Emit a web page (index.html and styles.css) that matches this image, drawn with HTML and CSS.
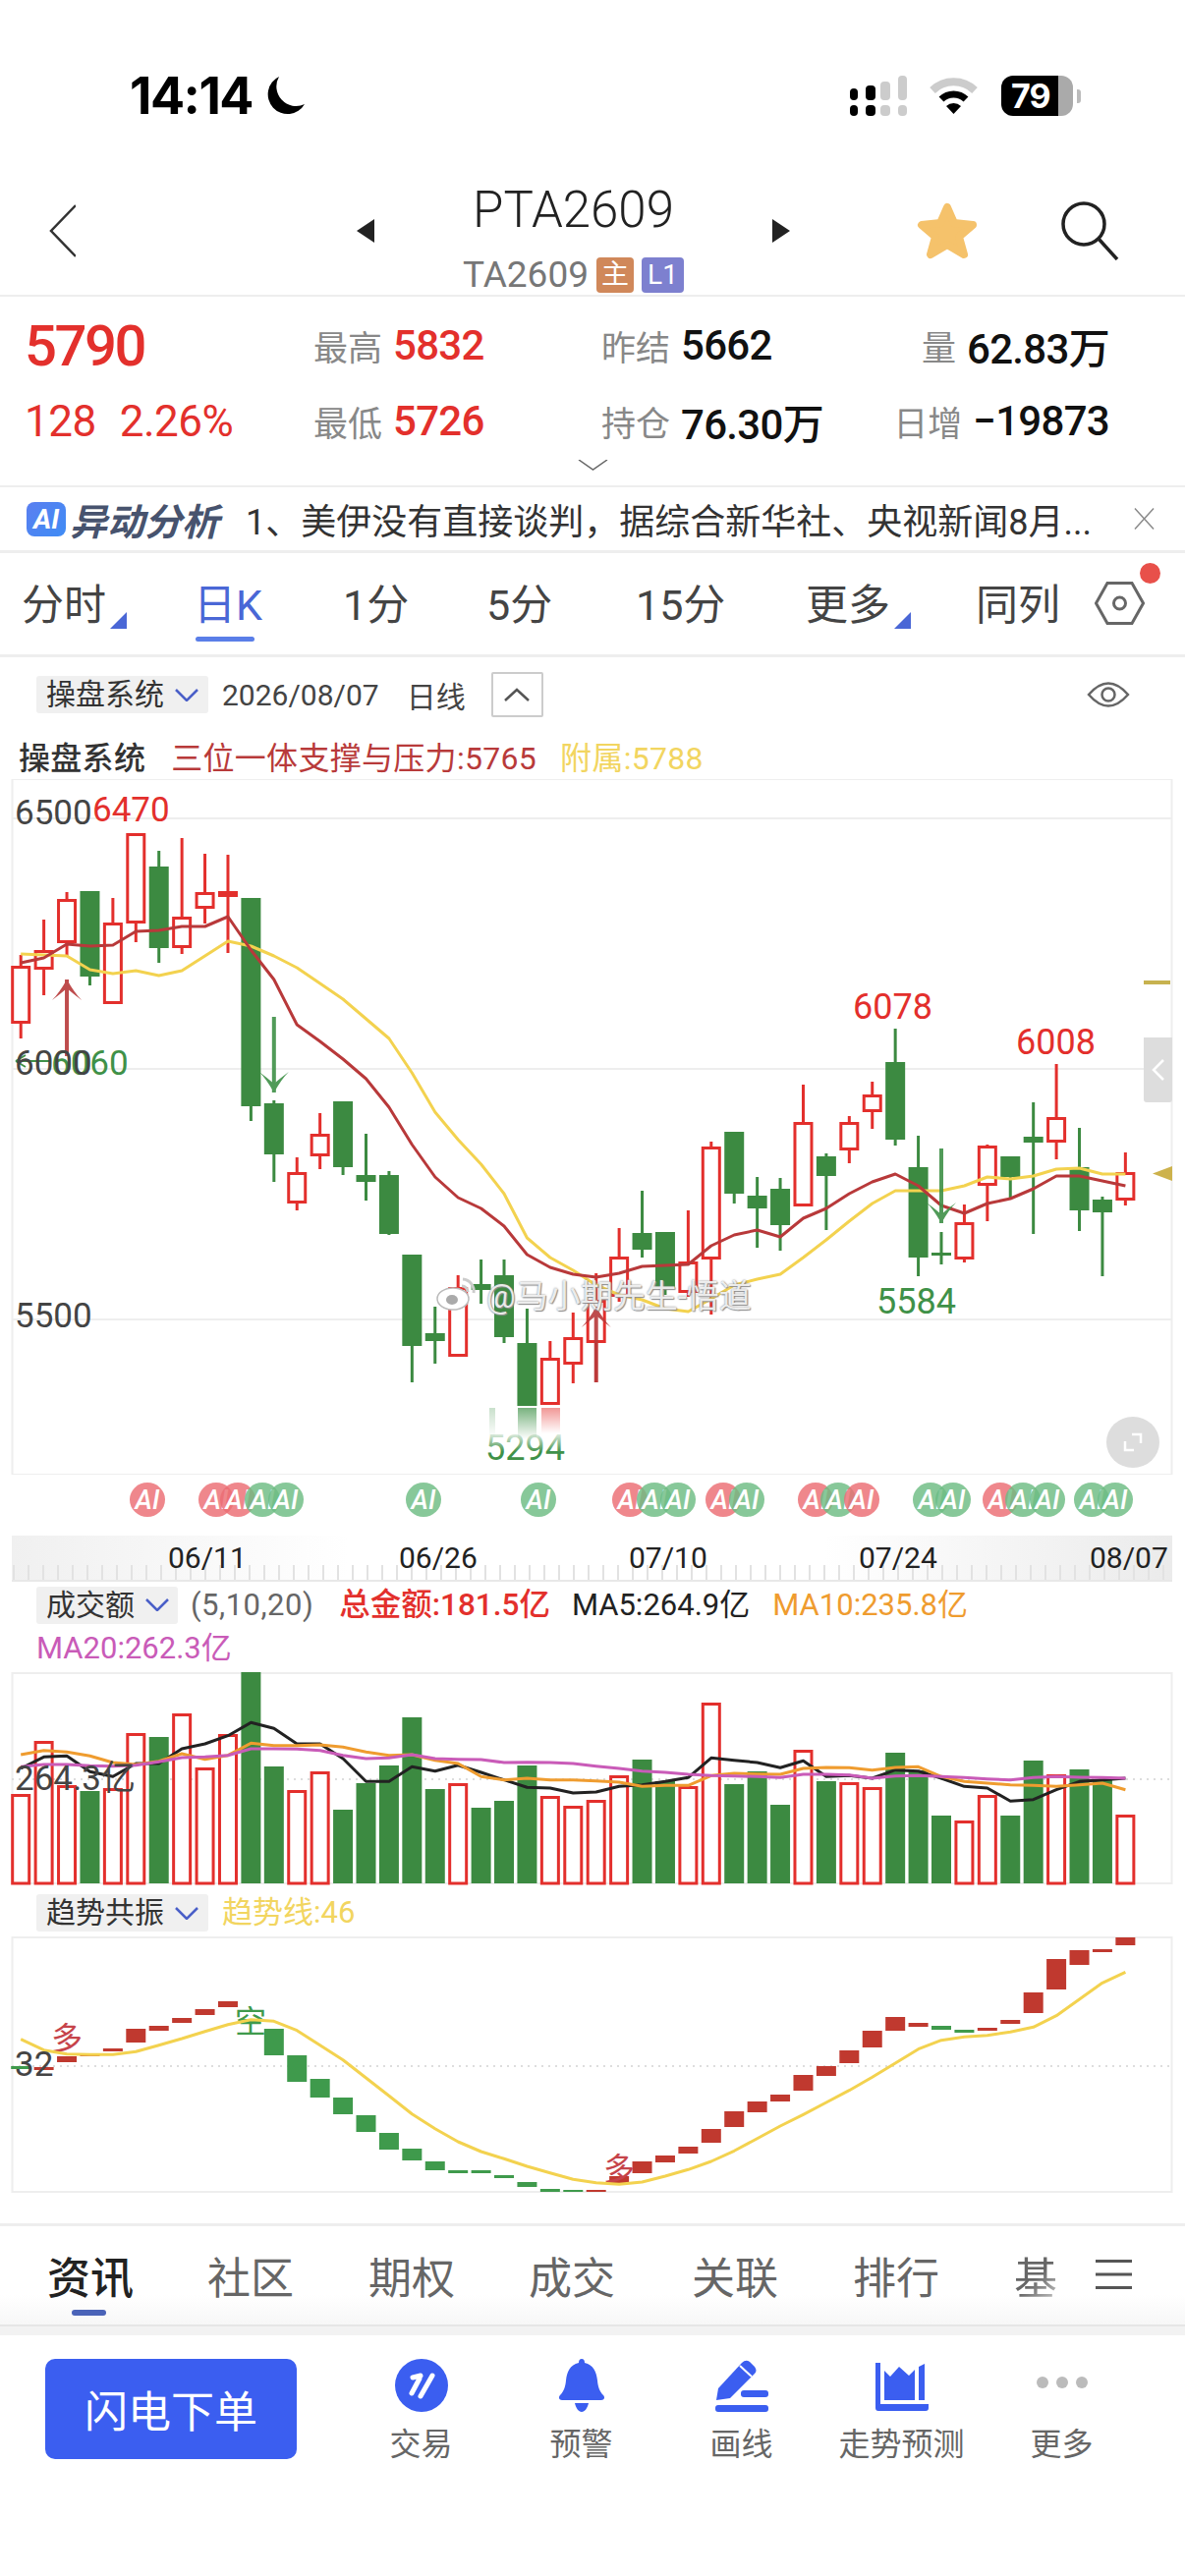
FILE: index.html
```html
<!DOCTYPE html>
<html lang="zh-CN">
<head>
  <meta charset="UTF-8" />
  <meta name="viewport" content="width=device-width, initial-scale=1.0" />
  <title>PTA2609</title>
  <link rel="stylesheet" href="styles.css">
</head>
<body>
  <!-- status bar -->
  <div class="status">
    <div class="status-left">
      <span class="time">14:14</span>
      <svg class="moon" viewBox="0 0 41 40"><path d="M15 0 A20 20 0 1 0 41 28 A20 20 0 0 1 15 0Z" fill="#000"/></svg>
    </div>
    <div class="status-right">
      <svg class="signal" viewBox="0 0 58 41">
        <rect x="0" y="13" width="8" height="12" rx="4" fill="#000"/>
        <rect x="16" y="10" width="10" height="15" rx="4" fill="#000"/>
        <rect x="31" y="6" width="10" height="19" rx="4" fill="#ccc"/>
        <rect x="49" y="0" width="9" height="25" rx="4" fill="#ccc"/>
        <rect x="0" y="30" width="8" height="11" rx="4" fill="#000"/>
        <rect x="16" y="30" width="10" height="11" rx="4" fill="#000"/>
        <rect x="31" y="30" width="10" height="11" rx="4" fill="#ccc"/>
        <rect x="49" y="30" width="9" height="11" rx="4" fill="#ccc"/>
      </svg>
      <svg class="wifi" viewBox="0 0 51 37">
        <path d="M4 13 A31 31 0 0 1 47 13" fill="none" stroke="#ccc" stroke-width="8"/>
        <path d="M13 22 A18 18 0 0 1 38 22" fill="none" stroke="#000" stroke-width="7"/>
        <path d="M18 29 A11 11 0 0 1 33 29 L25.5 37Z" fill="#000"/>
      </svg>
      <div class="battery"><span class="battery-level">79</span></div>
      <span class="battery-cap"></span>
    </div>
  </div>

  <!-- symbol header -->
  <header class="nav">
    <svg class="back" viewBox="0 0 27 54"><path d="M27 1 L2 27 L27 53" fill="none" stroke="#333" stroke-width="2.5"/></svg>
    <div class="symbol">
      <span class="arrow-left"></span>
      <div class="symbol-name">
        <div class="symbol-title">PTA2609</div>
        <div class="symbol-sub">
          <span class="symbol-code">TA2609</span>
          <span class="badge badge-main">主</span>
          <span class="badge badge-level">L1</span>
        </div>
      </div>
      <span class="arrow-right"></span>
    </div>
    <svg class="star" viewBox="0 0 62 60"><path d="M31 6 L38 22 L57 24 L43 36 L48 54 L31 44 L14 54 L19 36 L5 24 L24 22Z" fill="#f5c26b" stroke="#f5c26b" stroke-width="8" stroke-linejoin="round"/></svg>
    <svg class="search" viewBox="0 0 60 60"><circle cx="24" cy="23" r="21" fill="none" stroke="#222" stroke-width="3.5"/><path d="M39 38 L58 59" stroke="#222" stroke-width="3.5"/></svg>
  </header>

  <!-- quote panel -->
  <section class="quote">
    <div class="quote-cell price">5790</div>
    <div class="quote-cell"><span class="q-label">最高</span><span class="q-value up">5832</span></div>
    <div class="quote-cell"><span class="q-label">昨结</span><span class="q-value">5662</span></div>
    <div class="quote-cell q-right"><span class="q-label">量</span><span class="q-value">62.83万</span></div>
    <div class="quote-cell change"><span>128</span><span>2.26%</span></div>
    <div class="quote-cell"><span class="q-label">最低</span><span class="q-value up">5726</span></div>
    <div class="quote-cell"><span class="q-label">持仓</span><span class="q-value">76.30万</span></div>
    <div class="quote-cell q-right"><span class="q-label">日增</span><span class="q-value">−19873</span></div>
    <svg class="quote-more" viewBox="0 0 31 11"><path d="M1 0 L15.5 10 L30 0" fill="none" stroke="#666" stroke-width="1.5"/></svg>
  </section>

  <!-- AI news strip -->
  <section class="news">
    <span class="ai-logo">AI</span>
    <span class="news-title">异动分析</span>
    <span class="news-text">1、美伊没有直接谈判，据综合新华社、央视新闻8月...</span>
    <svg class="news-close" viewBox="0 0 22 22"><path d="M1 0 L21 22 M21 0 L1 22" stroke="#888" stroke-width="1.5"/></svg>
  </section>

  <!-- period tabs -->
  <nav class="periods">
    <span class="period">分时<i class="corner"></i></span>
    <span class="period period-on">日K</span>
    <span class="period">1分</span>
    <span class="period">5分</span>
    <span class="period">15分</span>
    <span class="period">更多<i class="corner"></i></span>
    <span class="period">同列</span>
    <span class="hex-wrap">
      <svg class="hex" viewBox="0 0 51 44"><path d="M1.5 22 L13 1.5 H38 L49.5 22 L38 42.5 H13Z" fill="none" stroke="#666" stroke-width="3"/><circle cx="25.5" cy="22" r="6" fill="none" stroke="#666" stroke-width="3"/></svg>
      <span class="hex-dot"></span>
    </span>
  </nav>

  <!-- chart toolbar -->
  <div class="toolbar">
    <span class="picker">操盘系统<svg class="picker-caret" viewBox="0 0 24 13"><path d="M1 1 L12 12 L23 1" fill="none" stroke="#4a5fc8" stroke-width="2.5"/></svg></span>
    <span class="tool-text tool-date">2026/08/07</span>
    <span class="tool-text tool-kind">日线</span>
    <span class="collapse"><svg viewBox="0 0 26 14"><path d="M1 13 L13 2 L25 13" fill="none" stroke="#555" stroke-width="2.5"/></svg></span>
    <svg class="eye" viewBox="0 0 44 30"><path d="M2 15 Q22 -8 42 15 Q22 38 2 15Z" fill="none" stroke="#666" stroke-width="2.5"/><circle cx="22" cy="15" r="6.5" fill="none" stroke="#666" stroke-width="2.5"/></svg>
  </div>
  <div class="legend">
    <span class="legend-name">操盘系统</span>
    <span class="legend-red">三位一体支撑与压力:5765</span>
    <span class="legend-yellow">附属:5788</span>
  </div>

  <!-- candlestick pane -->
  <div class="pane-main">
    <svg id="mainChart" class="chart chart-main" viewBox="0 793 1206 708"></svg>
    <div class="watermark">
      <svg class="wb-logo" viewBox="0 0 41 34">
        <ellipse cx="17" cy="22" rx="16" ry="11" fill="#fff" stroke="#bbb" stroke-width="1.5"/>
        <ellipse cx="16" cy="23" rx="6" ry="5" fill="#aaa"/>
        <path d="M27 2 A12 12 0 0 1 38 16 M26 9 A6 6 0 0 1 32 15" fill="none" stroke="#ccc" stroke-width="3"/>
      </svg>
      <span>@马小期先生-悟道</span>
    </div>
    <div class="side-handle"><svg viewBox="0 0 14 24"><path d="M12 2 L2 12 L12 22" fill="none" stroke="#fff" stroke-width="2.5"/></svg></div>
    <span class="last-mark"></span>
    <div class="fullscreen"><svg viewBox="0 0 22 22"><path d="M10 3 H19 V12 M3 10 V19 H12" fill="none" stroke="#fff" stroke-width="2.5"/></svg></div>
  </div>
  <svg id="markerRow" class="chart chart-markers" viewBox="0 1501 1206 62"></svg>
  <svg id="timeAxis" class="chart chart-axis" viewBox="0 1563 1206 47"></svg>

  <!-- turnover pane -->
  <div class="vol-head">
    <span class="picker picker-small">成交额<svg class="picker-caret" viewBox="0 0 24 13"><path d="M1 1 L12 12 L23 1" fill="none" stroke="#4a5fc8" stroke-width="2.5"/></svg></span>
    <span class="vol-args">(5,10,20)</span>
    <span class="vol-total">总金额:181.5亿</span>
    <span class="vol-ma5">MA5:264.9亿</span>
    <span class="vol-ma10">MA10:235.8亿</span>
    <span class="vol-ma20">MA20:262.3亿</span>
  </div>
  <svg id="volChart" class="chart chart-vol" viewBox="0 1702 1206 217"></svg>

  <!-- trend pane -->
  <div class="trend-head">
    <span class="picker">趋势共振<svg class="picker-caret" viewBox="0 0 24 13"><path d="M1 1 L12 12 L23 1" fill="none" stroke="#4a5fc8" stroke-width="2.5"/></svg></span>
    <span class="trend-value">趋势线:46</span>
  </div>
  <svg id="trendChart" class="chart chart-trend" viewBox="0 1971 1206 262"></svg>

  <!-- info tabs -->
  <nav class="info-tabs">
    <span class="info-tab info-on">资讯</span>
    <span class="info-tab">社区</span>
    <span class="info-tab">期权</span>
    <span class="info-tab">成交</span>
    <span class="info-tab">关联</span>
    <span class="info-tab">排行</span>
    <span class="info-tab info-fade">基</span>
    <svg class="info-menu" viewBox="0 0 37 30"><path d="M0 1.5 H37 M0 15 H37 M0 28.5 H37" stroke="#555" stroke-width="3"/></svg>
  </nav>

  <!-- bottom actions -->
  <footer class="actions">
    <button class="order">闪电下单</button>
    <div class="action">
      <svg class="action-icon" viewBox="0 0 54 54"><circle cx="27" cy="27" r="27" fill="#3b5ef0"/><path d="M17 35 L25 20 M26 38 L38 17 M18 19 L26 17" stroke="#fff" stroke-width="5" stroke-linecap="round"/></svg>
      <span>交易</span>
    </div>
    <div class="action">
      <svg class="action-icon" viewBox="0 0 48 54"><path d="M24 0 C26 0 27 1.5 27 4 C36 6 39 13 40 22 C40.500 28 42 33 46 37 C48 39 47 42 44 42 H4 C1 42 0 39 2 37 C6 33 7.500 28 8 22 C9 13 12 6 21 4 C21 1.500 22 0 24 0Z M17 45 H31 C30 50 27 54 24 54 S18 50 17 45Z" fill="#3b5ef0"/></svg>
      <span>预警</span>
    </div>
    <div class="action">
      <svg class="action-icon" viewBox="0 0 54 54"><path d="M1 42 L3 30 L27 4 Q31 0 35 3 L40 8 Q43 12 40 15 L15 40 Z" fill="#3b5ef0"/><path d="M25 7 L37 18" stroke="#fff" stroke-width="2"/><rect x="26" y="32" width="28" height="7" rx="3" fill="#3b5ef0"/><rect x="0" y="47" width="54" height="7" rx="3" fill="#3b5ef0"/></svg>
      <span>画线</span>
    </div>
    <div class="action">
      <svg class="action-icon" viewBox="0 0 54 54"><path d="M0 4 H5 V46 H54 V50 Q54 53 51 53 H3 Q0 53 0 50Z" fill="#3b5ef0"/><path d="M9 12 L15 18 L24 8 L34 17 L40 11 V42 H9Z M44 8 L50 5 V42 H44Z" fill="#3b5ef0"/></svg>
      <span>走势预测</span>
    </div>
    <div class="action">
      <svg class="action-icon" viewBox="0 0 54 54"><circle cx="7" cy="24" r="6" fill="#bbb"/><circle cx="27" cy="24" r="6" fill="#bbb"/><circle cx="47" cy="24" r="6" fill="#bbb"/></svg>
      <span>更多</span>
    </div>
  </footer>

  <script src="chart.js"></script>
</body>
</html>
```

FILE: styles.css
```css
* {
  box-sizing: border-box;
}

body {
  margin: 0;
  width: 1206px;
  height: 2622px;
  overflow: hidden;
  background: #fff;
  color: #222;
  font-family: Roboto, "Noto Sans CJK SC", sans-serif;
}

/* status bar */
.status {
  height: 170px;
  padding: 77px 106px 0 132px;
  display: flex;
  justify-content: space-between;
}

.status-left {
  display: flex;
  gap: 12px;
  height: 41px;
  align-items: center;
}

.time {
  font-family: Inter, sans-serif;
  font-weight: 700;
  font-size: 52px;
  letter-spacing: -1.5px;
  color: #000;
}

.moon {
  width: 41px;
  height: 40px;
}

.status-right {
  display: flex;
  align-items: center;
  height: 41px;
}

.signal {
  width: 58px;
  height: 41px;
  margin-right: 22px;
}

.wifi {
  width: 51px;
  height: 37px;
  margin-right: 23px;
}

.battery {
  width: 73px;
  height: 41px;
  border-radius: 12px;
  background: linear-gradient(90deg, #000 80%, #aaa 80%);
  display: flex;
  align-items: center;
  padding-left: 10px;
}

.battery-level {
  color: #fff;
  font-family: Inter, sans-serif;
  font-weight: 700;
  font-size: 34px;
  letter-spacing: -1px;
}

.battery-cap {
  width: 4px;
  height: 14px;
  margin-left: 4px;
  background: #bbb;
  border-radius: 0 3px 3px 0;
}

/* symbol header */
.nav {
  height: 132px;
  padding-left: 50px;
  border-bottom: 2px solid #eee;
  display: flex;
  align-items: flex-start;
}

.back {
  width: 27px;
  height: 54px;
  margin-top: 38px;
}

.symbol {
  width: 441px;
  margin-left: 286px;
  display: flex;
  justify-content: space-between;
}

.arrow-left,
.arrow-right {
  width: 18px;
  height: 24px;
  margin-top: 53px;
  background: #222;
}

.arrow-left {
  clip-path: polygon(100% 0, 100% 100%, 0 50%);
}

.arrow-right {
  clip-path: polygon(0 0, 100% 50%, 0 100%);
}

.symbol-name {
  display: flex;
  flex-direction: column;
  align-items: center;
}

.symbol-title {
  font-size: 51px;
  line-height: 56px;
  margin-top: 16px;
  font-weight: 300;
  color: #222;
}

.symbol-sub {
  display: flex;
  align-items: center;
  margin-top: 16px;
}

.symbol-code {
  font-size: 37px;
  color: #777;
  margin-right: 8px;
}

.badge {
  height: 36px;
  border-radius: 4px;
  color: #fff;
  font-size: 28px;
  line-height: 36px;
  text-align: center;
}

.badge-main {
  width: 38px;
  background: #d0885a;
  margin-right: 8px;
}

.badge-level {
  width: 43px;
  background: #7d80cf;
}

.star {
  width: 62px;
  height: 60px;
  margin: 35px 0 0 129px;
}

.search {
  width: 60px;
  height: 60px;
  margin: 35px 0 0 84px;
}

/* quote panel */
.quote {
  position: relative;
  height: 194px;
  padding: 11px 77px 0 25px;
  border-bottom: 2px solid #eee;
  display: grid;
  grid-template-columns: 294px 293px 1fr 260px;
  grid-auto-rows: 77px;
  align-items: center;
}

.quote-cell {
  display: flex;
  align-items: center;
  gap: 11px;
}

.q-label {
  font-size: 35px;
  color: #888;
}

.q-value {
  font-size: 42px;
  font-weight: 500;
  letter-spacing: -.7px;
  color: #111;
}

.q-value.up,
.price,
.change {
  color: #e3302c;
}

.q-right {
  justify-content: flex-end;
}

.price {
  font-size: 58px;
  font-weight: 500;
  letter-spacing: -2.500px;
}

.change {
  font-size: 44px;
  gap: 24px;
  letter-spacing: -.5px;
}

.quote-more {
  position: absolute;
  left: 588px;
  top: 166px;
  width: 31px;
  height: 11px;
}

/* AI news strip */
.news {
  height: 67px;
  padding: 0 31px 0 27px;
  border-bottom: 3px solid #eee;
  display: flex;
  align-items: center;
}

.ai-logo {
  width: 40px;
  height: 35px;
  border-radius: 8px;
  background: linear-gradient(135deg, #5b7ff0, #3f8cf5);
  color: #fff;
  font-weight: 700;
  font-style: italic;
  font-size: 28px;
  line-height: 35px;
  text-align: center;
}

.news-title {
  margin-left: 4px;
  font-size: 38px;
  font-style: italic;
  font-weight: 700;
  color: #47536e;
}

.news-text {
  margin-left: 27px;
  font-size: 36px;
  color: #333;
  white-space: nowrap;
}

.news-close {
  width: 21px;
  height: 22px;
  margin-left: auto;
}

/* period tabs */
.periods {
  height: 106px;
  padding: 27px 0 0 22px;
  border-bottom: 3px solid #eee;
  display: grid;
  grid-template-columns: 175px 152px 146px 152px 173px 173px 121px 1fr;
}

.period {
  font-size: 43px;
  line-height: 52px;
  height: 52px;
  color: #444;
  display: flex;
}

.period-on {
  position: relative;
  color: #4a67d6;
}

.period-on::after {
  content: "";
  position: absolute;
  left: 2px;
  top: 58px;
  width: 60px;
  height: 5px;
  border-radius: 3px;
  background: #5a7ee8;
}

.corner {
  width: 17px;
  height: 17px;
  margin: 33px 0 0 4px;
  background: #4a67d6;
  clip-path: polygon(100% 0, 100% 100%, 0 100%);
}

.hex-wrap {
  position: relative;
}

.hex {
  width: 51px;
  height: 44px;
  margin-top: 2px;
}

.hex-dot {
  position: absolute;
  left: 46px;
  top: -17px;
  width: 21px;
  height: 21px;
  border-radius: 50%;
  background: #e8504a;
}

/* chart toolbar */
.toolbar {
  height: 76px;
  padding: 0 56px 0 37px;
  display: flex;
  align-items: center;
}

.picker {
  width: 175px;
  height: 38px;
  padding-left: 10px;
  background: #f0f0f0;
  border-radius: 3px;
  font-size: 30px;
  line-height: 38px;
  color: #333;
  display: flex;
  align-items: center;
  gap: 11px;
}

.picker-small {
  width: 144px;
}

.picker-caret {
  width: 24px;
  height: 13px;
}

.tool-text {
  font-size: 30px;
  color: #444;
}

.tool-date {
  margin-left: 14px;
}

.tool-kind {
  margin-left: 28px;
}

.collapse {
  width: 53px;
  height: 46px;
  margin-left: 26px;
  border: 2px solid #ccc;
  border-radius: 2px;
  display: flex;
  align-items: center;
  justify-content: center;
}

.collapse svg {
  width: 26px;
  height: 14px;
}

.eye {
  width: 44px;
  height: 30px;
  margin-left: auto;
}

.legend {
  height: 48px;
  padding-left: 19px;
  display: flex;
  align-items: center;
  font-size: 32px;
  letter-spacing: .3px;
}

.legend-name {
  color: #333;
  font-weight: 500;
}

.legend-red {
  margin-left: 26px;
  color: #b83a3a;
}

.legend-yellow {
  margin-left: 24px;
  color: #f2d560;
}

/* chart panes */
.chart {
  display: block;
  width: 1206px;
}

.chart-main {
  height: 708px;
}

.chart-markers {
  height: 62px;
}

.chart-axis {
  height: 47px;
}

.chart-vol {
  height: 217px;
}

.chart-trend {
  height: 262px;
}

.pane-main {
  position: relative;
}

.watermark {
  position: absolute;
  left: 444px;
  top: 500px;
  display: flex;
  align-items: center;
  gap: 10px;
  font-size: 33px;
  color: rgba(255, 255, 255, .85);
  text-shadow: 0 0 2px #777, 1px 1px 1px #999;
  white-space: nowrap;
}

.wb-logo {
  width: 41px;
  height: 34px;
}

.side-handle {
  position: absolute;
  left: 1164px;
  top: 263px;
  width: 29px;
  height: 66px;
  background: #ddd;
  border-radius: 0 0 3px 3px;
  display: flex;
  align-items: center;
  justify-content: center;
}

.side-handle svg {
  width: 14px;
  height: 24px;
}

.last-mark {
  position: absolute;
  left: 1173px;
  top: 394px;
  width: 20px;
  height: 15px;
  background: #cdb24c;
  clip-path: polygon(0 50%, 100% 0, 100% 100%);
}

.fullscreen {
  position: absolute;
  left: 1126px;
  top: 649px;
  width: 54px;
  height: 52px;
  border-radius: 50%;
  background: #ddd;
  display: flex;
  align-items: center;
  justify-content: center;
}

.fullscreen svg {
  width: 22px;
  height: 22px;
}

/* turnover legend */
.vol-head {
  height: 92px;
  padding: 4px 0 0 37px;
  display: flex;
  flex-wrap: wrap;
  align-items: center;
  align-content: flex-start;
  font-size: 31px;
  line-height: 39px;
}

.vol-args {
  margin-left: 13px;
  color: #666;
  font-size: 31px;
  letter-spacing: .5px;
}

.vol-total {
  margin-left: 26px;
  color: #e3302c;
  font-weight: 500;
  font-size: 31.500px;
}

.vol-ma5 {
  margin-left: 22px;
  color: #222;
}

.vol-ma10 {
  margin-left: 23px;
  color: #ef9c2f;
}

.vol-ma20 {
  width: 100%;
  margin-top: 10px;
  line-height: 30px;
  color: #c95bb8;
}

/* trend legend */
.trend-head {
  height: 52px;
  padding: 9px 0 0 37px;
  display: flex;
  align-items: flex-start;
}

.trend-value {
  margin-left: 14px;
  font-size: 31px;
  line-height: 38px;
  color: #f2d560;
}

/* info tabs */
.info-tabs {
  position: relative;
  margin-top: 30px;
  height: 105px;
  padding: 26px 0 0 48px;
  border-top: 3px solid #eee;
  border-bottom: 2px solid #e6e6e6;
  background: linear-gradient(180deg, #fff 70%, #f7f7f7 100%);
  display: grid;
  grid-template-columns: 163px 164px 163px 166px 164px 164px 83px auto;
}

.info-tab {
  font-size: 44px;
  line-height: 56px;
  height: 56px;
  color: #666;
}

.info-on {
  position: relative;
  color: #222;
  font-weight: 500;
}

.info-on::after {
  content: "";
  position: absolute;
  left: 25px;
  top: 59px;
  width: 35px;
  height: 6px;
  border-radius: 3px;
  background: #4a63b8;
}

.info-fade {
  -webkit-mask-image: linear-gradient(135deg, #000 35%, transparent 85%);
  mask-image: linear-gradient(135deg, #000 35%, transparent 85%);
}

.info-menu {
  width: 37px;
  height: 30px;
  margin-top: 8px;
}

/* bottom actions */
.actions {
  padding: 24px 0 0 46px;
  border-top: 9px solid #f2f2f2;
  display: flex;
}

.order {
  width: 256px;
  height: 102px;
  margin-right: 45px;
  border: none;
  border-radius: 10px;
  background: #3b5ef0;
  color: #fff;
  font-family: inherit;
  font-size: 44px;
}

.action {
  width: 163px;
  display: flex;
  flex-direction: column;
  align-items: center;
  font-size: 32px;
  line-height: 40px;
  color: #666;
}

.action-icon {
  width: 54px;
  height: 54px;
  margin-bottom: 13px;
}
```

FILE: chart.js
```js
const RED = '#e32f2c';
const GREEN = '#3c8a41';
const LINE_RED = '#b8393a';
const LINE_YELLOW = '#f3d24f';

const cx = i => 21.2 + 23.42 * i;

// type, high, body top, body bottom, low
const candles = [
  ['r', 972, 983, 1042, 1057], ['r', 936, 967, 987, 1013], ['r', 908, 915, 960, 973],
  ['g', 907, 907, 994, 1003], ['r', 914, 939, 1022, 1022], ['r', 848, 848, 940, 959],
  ['g', 866, 882, 965, 980], ['r', 853, 933, 965, 971], ['r', 869, 908, 925, 940],
  ['r', 870, 907, 913, 970], ['g', 914, 914, 1126, 1141], ['g', 1120, 1123, 1175, 1203],
  ['r', 1178, 1193, 1225, 1232], ['r', 1133, 1154, 1177, 1190], ['g', 1121, 1121, 1188, 1196],
  ['g', 1154, 1196, 1203, 1222], ['g', 1192, 1196, 1256, 1257], ['g', 1277, 1277, 1370, 1407],
  ['g', 1330, 1357, 1365, 1388], ['r', 1298, 1310, 1381, 1381], ['g', 1282, 1307, 1313, 1327],
  ['g', 1282, 1298, 1361, 1367], ['g', 1332, 1367, 1431, 1431], ['r', 1365, 1382, 1430, 1430],
  ['r', 1336, 1361, 1389, 1408], ['r', 1296, 1323, 1367, 1407], ['r', 1250, 1279, 1320, 1325],
  ['g', 1212, 1255, 1272, 1280], ['g', 1254, 1254, 1312, 1318], ['r', 1232, 1284, 1316, 1320],
  ['r', 1162, 1167, 1282, 1338], ['g', 1152, 1152, 1215, 1225], ['g', 1198, 1217, 1230, 1270],
  ['g', 1199, 1210, 1247, 1273], ['r', 1104, 1142, 1228, 1228], ['g', 1174, 1177, 1197, 1252],
  ['r', 1136, 1142, 1171, 1184], ['r', 1101, 1114, 1132, 1149], ['g', 1047, 1081, 1160, 1166],
  ['g', 1156, 1188, 1280, 1299], ['g', 1254, 1275, 1278, 1287], ['r', 1226, 1244, 1282, 1285],
  ['r', 1165, 1166, 1207, 1243], ['g', 1177, 1177, 1198, 1220], ['g', 1122, 1157, 1163, 1256],
  ['r', 1083, 1137, 1163, 1180], ['g', 1148, 1188, 1232, 1253], ['g', 1218, 1221, 1234, 1299],
  ['r', 1173, 1193, 1222, 1227]
];

const maRed = [980, 975, 961, 963, 962, 948, 947, 943, 943, 933, 967, 997, 1043, 1060, 1078, 1098, 1127,
  1165, 1198, 1219, 1230, 1248, 1277, 1290, 1297, 1300, 1296, 1289, 1288, 1287, 1268, 1257, 1252, 1259,
  1240, 1230, 1215, 1203, 1195, 1207, 1227, 1235, 1225, 1220, 1210, 1197, 1197, 1202, 1207];

const maYellow = [971, 972, 973, 987, 991, 988, 993, 988, 973, 958, 963, 973, 985, 1001, 1017, 1037, 1057,
  1092, 1132, 1160, 1185, 1215, 1260, 1280, 1293, 1308, 1318, 1323, 1332, 1335, 1322, 1308, 1302, 1297,
  1280, 1262, 1243, 1225, 1212, 1212, 1212, 1207, 1198, 1200, 1197, 1190, 1189, 1195, 1195];

// turnover: top of each bar
const volumes = [
  ['r', 1826], ['r', 1772], ['r', 1817], ['g', 1823], ['r', 1820], ['r', 1764], ['g', 1768], ['r', 1744],
  ['r', 1799], ['r', 1765], ['g', 1702], ['g', 1798], ['r', 1822], ['r', 1803], ['g', 1842], ['g', 1815],
  ['g', 1797], ['g', 1748], ['g', 1821], ['r', 1815], ['g', 1840], ['g', 1833], ['g', 1797], ['r', 1828],
  ['r', 1838], ['r', 1832], ['r', 1807], ['g', 1791], ['g', 1813], ['r', 1818], ['r', 1733], ['g', 1816],
  ['g', 1803], ['g', 1837], ['r', 1781], ['g', 1813], ['r', 1814], ['r', 1819], ['g', 1784], ['g', 1802],
  ['g', 1848], ['r', 1853], ['r', 1827], ['g', 1848], ['g', 1792], ['r', 1806], ['g', 1801], ['g', 1812],
  ['r', 1847]
];

const volY = v => 1500 + v / 3;
const ma5 = [900, 865, 862, 910, 925, 885, 885, 840, 825, 800, 760, 778, 825, 825, 870, 940, 940, 895, 908, 890, 912,
  935, 958, 960, 975, 972, 955, 950, 940, 928, 868, 875, 882, 898, 877, 925, 922, 930, 905, 908, 930, 955, 960, 1000,
  995, 965, 940, 935, 930].map(volY);
const ma10 = [858, 845, 850, 862, 882, 888, 878, 855, 872, 860, 823, 830, 830, 828, 835, 850, 860, 858, 875, 885, 925,
  935, 930, 935, 935, 938, 942, 955, 952, 952, 922, 915, 917, 918, 900, 897, 898, 905, 897, 895, 925, 940, 945, 950,
  952, 955, 950, 945, 965].map(volY);
const ma20 = [895, 888, 888, 892, 893, 890, 880, 867, 865, 860, 840, 840, 841, 845, 860, 870, 868, 858, 870, 872, 873,
  882, 881, 882, 885, 893, 900, 908, 912, 918, 922, 923, 925, 928, 918, 918, 920, 930, 923, 922, 925, 928, 932, 935,
  928, 925, 927, 928, 930].map(volY);

// trend blocks: type, top, bottom
const trend = [
  ['g', 2103, 2106], ['r', 2104, 2107], ['r', 2093, 2099], ['r', 2092, 2093], ['r', 2085, 2088], ['r', 2065, 2079],
  ['r', 2062, 2067], ['r', 2054, 2059], ['r', 2045, 2051], ['r', 2037, 2043], ['g', 2055, 2060], ['g', 2065, 2092],
  ['g', 2092, 2119], ['g', 2116, 2135], ['g', 2135, 2152], ['g', 2153, 2170], ['g', 2171, 2188], ['g', 2187, 2199],
  ['g', 2200, 2209], ['g', 2209, 2212], ['g', 2209, 2212], ['g', 2214, 2217], ['g', 2221, 2226], ['g', 2228, 2231],
  ['g', 2229, 2231], ['r', 2229, 2231], ['r', 2215, 2222], ['r', 2200, 2212], ['r', 2194, 2201], ['r', 2185, 2192],
  ['r', 2167, 2181], ['r', 2149, 2165], ['r', 2139, 2150], ['r', 2132, 2139], ['r', 2112, 2128], ['r', 2103, 2113],
  ['r', 2087, 2100], ['r', 2067, 2084], ['r', 2053, 2067], ['r', 2059, 2063], ['g', 2062, 2066], ['g', 2066, 2069],
  ['r', 2064, 2067], ['r', 2056, 2060], ['r', 2028, 2049], ['r', 1994, 2025], ['r', 1985, 2000], ['r', 1984, 1987],
  ['r', 1972, 1980]
];

const trendLine = [407, 440, 452, 454, 454, 445, 425, 405, 383, 362, 347, 352, 380, 425, 470, 525, 580, 635, 680, 720, 750,
  772, 795, 815, 835, 845, 850, 843, 825, 805, 780, 748, 710, 672, 637, 600, 563, 523, 480, 437, 410, 400, 395, 385, 370,
  335, 285, 235, 202].map(v => 1940 + v / 3);

// AI markers along the bottom of the candles
const aiMarks = [['r', 150], ['r', 220], ['r', 242], ['g', 267], ['g', 291], ['g', 431], ['g', 548], ['r', 641], ['g', 666],
  ['g', 690], ['r', 736], ['g', 760], ['r', 830], ['g', 853], ['r', 877], ['g', 947], ['g', 970], ['r', 1018], ['g', 1041],
  ['g', 1066], ['g', 1111], ['g', 1135]];

function frame(top, bottom) {
  return `<rect x="12.500" y="${top}" width="1180" height="${bottom - top}" fill="none" stroke="#eee" stroke-width="2"/>`;
}

function gridline(y, dotted) {
  const dash = dotted ? ' stroke-dasharray="2 5"' : '';
  return `<line x1="12" x2="1193" y1="${y}" y2="${y}" stroke="${dotted ? '#ddd' : '#eee'}" stroke-width="2"${dash}/>`;
}

function label(x, y, text, color, size = 35) {
  return `<text x="${x}" y="${y}" fill="${color}" font-size="${size}">${text}</text>`;
}

function polyline(values, color, width = 3) {
  const pts = values.map((y, i) => `${cx(i).toFixed(1)},${y.toFixed(1)}`).join(' ');
  return `<polyline points="${pts}" fill="none" stroke="${color}" stroke-width="${width}" stroke-linejoin="round"/>`;
}

function drawCandle(c, i) {
  const [type, high, top, bottom, low] = c;
  const x = cx(i);
  if (type === 'g') {
    return `<rect x="${x - 1.5}" y="${high}" width="3" height="${low - high}" fill="${GREEN}"/>` +
      `<rect x="${x - 10}" y="${top}" width="20" height="${Math.max(bottom - top, 2)}" fill="${GREEN}"/>`;
  }
  return `<rect x="${x - 1.5}" y="${high}" width="3" height="${top - high}" fill="${RED}"/>` +
    `<rect x="${x - 1.5}" y="${bottom}" width="3" height="${low - bottom}" fill="${RED}"/>` +
    `<rect x="${x - 8.500}" y="${top + 1.500}" width="17" height="${bottom - top - 3}" fill="#fff" stroke="${RED}" stroke-width="3"/>`;
}

// tip is where the arrow points, tail is the far end of its shaft
function arrow(x, tip, tail, color) {
  const dir = tail > tip ? 1 : -1;
  const wing = tip + dir * 21;
  const notch = tip + dir * 9;
  const bend = tip + dir * 15;
  return `<g opacity=".9"><rect x="${x - 2}" y="${Math.min(tip, tail)}" width="4" height="${Math.abs(tail - tip)}" fill="${color}"/>` +
    `<path d="M${x} ${tip} Q${x - 8} ${tip + dir * 14} ${x - 15} ${wing} Q${x - 7} ${bend} ${x} ${notch} Q${x + 7} ${bend} ${x + 15} ${wing} Q${x + 8} ${tip + dir * 14} ${x} ${tip}Z" fill="${color}"/></g>`;
}

function drawMain() {
  let s = frame(793, 1501) + gridline(833) + gridline(1088) + gridline(1343);
  s += `<rect x="1164" y="998" width="27" height="4" fill="#c7b24f"/>`;
  s += candles.map(drawCandle).join('');
  s += polyline(maYellow, LINE_YELLOW) + polyline(maRed, LINE_RED);
  s += arrow(cx(2), 997, 1075, LINE_RED) + arrow(cx(25), 1330, 1407, LINE_RED);
  s += arrow(cx(11), 1112, 1035, '#3f9148') + arrow(cx(40), 1245, 1169, '#3f9148');

  s += label(94, 836, '6470', RED);
  s += label(15, 839, '6500', '#444');
  s += `<path d="M16 1080 H50 M16 1080 L26 1074 M16 1080 L26 1086" stroke="#3f9148" stroke-width="2" fill="none"/>`;
  s += label(52, 1094, '6060', '#3f9148');
  s += label(15, 1094, '6000', '#444');
  s += label(15, 1351, '5500', '#444');
  s += label(868, 1037, '6078', RED, 36);
  s += label(1034, 1073, '6008', RED, 36);
  s += label(892, 1337, '5584', '#3f9148', 36);
  s += label(494, 1486, '5294', '#3f9148', 36);

  // the low label sits under a fade
  s += `<defs><linearGradient id="fade" x1="0" x2="0" y1="0" y2="1"><stop offset="0" stop-color="#fff"/><stop offset="1" stop-color="#fff" stop-opacity="0"/></linearGradient>` +
    `<linearGradient id="fadeGreen" x1="0" x2="0" y1="0" y2="1"><stop offset="0" stop-color="#3f9148" stop-opacity=".7"/><stop offset="1" stop-color="#3f9148" stop-opacity="0"/></linearGradient>` +
    `<linearGradient id="fadeRed" x1="0" x2="0" y1="0" y2="1"><stop offset="0" stop-color="${RED}" stop-opacity=".5"/><stop offset="1" stop-color="${RED}" stop-opacity="0"/></linearGradient></defs>`;
  s += `<rect x="490" y="1456" width="88" height="22" fill="url(#fade)"/>`;
  s += `<rect x="498" y="1433" width="6" height="30" fill="url(#fadeGreen)" opacity=".4"/>`;
  s += `<rect x="527" y="1433" width="19" height="32" fill="url(#fadeGreen)"/>`;
  s += `<rect x="551" y="1433" width="19" height="26" fill="url(#fadeRed)"/>`;
  document.getElementById('mainChart').innerHTML = s;
}

function drawMarkers() {
  document.getElementById('markerRow').innerHTML = aiMarks.map(([type, x]) => {
    const color = type === 'r' ? '#ec6d73' : '#6cbc82';
    return `<ellipse cx="${x}" cy="1526.500" rx="18" ry="17.500" fill="${color}" opacity=".82"/>` +
      `<text x="${x}" y="1536" text-anchor="middle" fill="#fff" font-size="27" font-weight="500" font-style="italic">AI</text>`;
  }).join('');
}

function drawAxis() {
  let s = `<defs><linearGradient id="band"><stop offset="0" stop-color="#f0f0f0"/><stop offset=".29" stop-color="#fff"/>` +
    `<stop offset=".7" stop-color="#fff"/><stop offset="1" stop-color="#ebebeb"/></linearGradient></defs>`;
  s += `<rect x="12" y="1563" width="1181" height="47" fill="url(#band)"/>`;
  for (let x = 13; x < 1190; x += 15) {
    s += `<rect x="${x}" y="1593" width="2" height="15" fill="#e2e2e2"/>`;
  }
  s += `<rect x="12" y="1608" width="1181" height="2" fill="#e8e8e8"/>`;
  [[171, '06/11'], [406, '06/26'], [640, '07/10'], [874, '07/24'], [1109, '08/07']].forEach(([x, t]) => {
    s += label(x, 1596, t, '#222', 30);
  });
  document.getElementById('timeAxis').innerHTML = s;
}

function drawVolume() {
  let s = frame(1703, 1917) + gridline(1811, true);
  volumes.forEach(([type, top], i) => {
    const x = cx(i);
    if (type === 'g') {
      s += `<rect x="${x - 10}" y="${top}" width="20" height="${1917 - top}" fill="${GREEN}"/>`;
    } else {
      s += `<rect x="${x - 8.500}" y="${top + 1.500}" width="17" height="${1915.500 - top}" fill="#fff" stroke="${RED}" stroke-width="3"/>`;
    }
  });
  s += polyline(ma5, '#222') + polyline(ma10, '#ef9c2f') + polyline(ma20, '#c95bb8');
  s += label(15, 1822, '264.3亿', '#444');
  document.getElementById('volChart').innerHTML = s;
}

function drawTrend() {
  let s = frame(1972, 2231) + gridline(2103, true);
  trend.forEach(([type, top, bottom], i) => {
    const color = type === 'g' ? '#3f9a4c' : '#c0392f';
    s += `<rect x="${cx(i) - 10}" y="${top}" width="20" height="${bottom - top}" fill="${color}"/>`;
  });
  s += label(52, 2086, '多', '#c6434a', 32);
  s += label(239, 2069, '空', '#3f9a4c', 32);
  s += label(614, 2219, '多', '#c6434a', 32);
  s += polyline(trendLine, LINE_YELLOW);
  s += label(15, 2113, '32', '#444');
  document.getElementById('trendChart').innerHTML = s;
}

drawMain();
drawMarkers();
drawAxis();
drawVolume();
drawTrend();
```
